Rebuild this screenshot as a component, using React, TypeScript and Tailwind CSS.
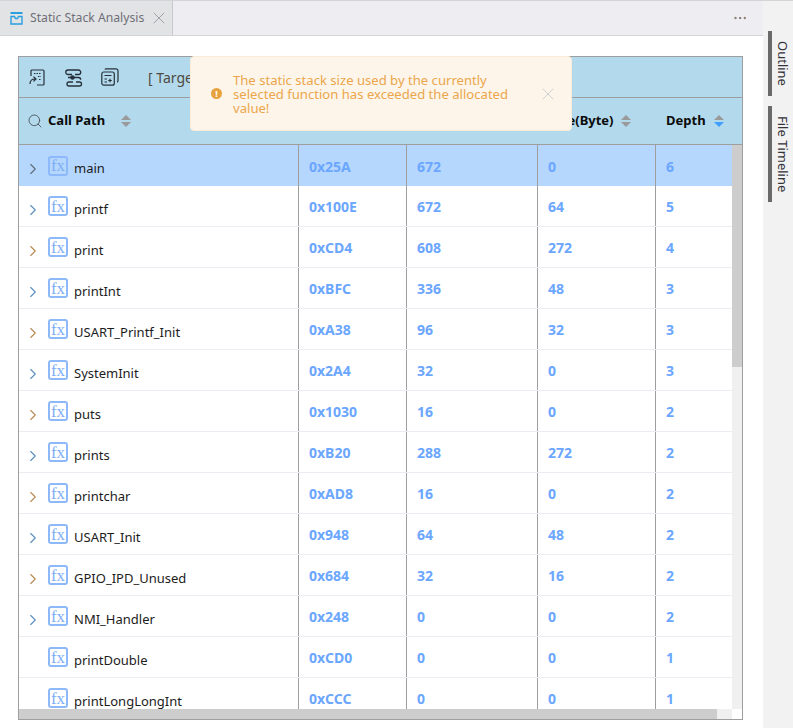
import { ChevronRight, Ellipsis, Search, X } from 'lucide-react'

const ROWS = [
  { name: 'main', addr: '0x25A', total: '672', size: '0', depth: '6', chevron: 'text-[#5f6b7a]' },
  { name: 'printf', addr: '0x100E', total: '672', size: '64', depth: '5', chevron: 'text-[#5a8fc0]' },
  { name: 'print', addr: '0xCD4', total: '608', size: '272', depth: '4', chevron: 'text-[#b98a55]' },
  { name: 'printInt', addr: '0xBFC', total: '336', size: '48', depth: '3', chevron: 'text-[#5a8fc0]' },
  { name: 'USART_Printf_Init', addr: '0xA38', total: '96', size: '32', depth: '3', chevron: 'text-[#b98a55]' },
  { name: 'SystemInit', addr: '0x2A4', total: '32', size: '0', depth: '3', chevron: 'text-[#5a8fc0]' },
  { name: 'puts', addr: '0x1030', total: '16', size: '0', depth: '2', chevron: 'text-[#b98a55]' },
  { name: 'prints', addr: '0xB20', total: '288', size: '272', depth: '2', chevron: 'text-[#5a8fc0]' },
  { name: 'printchar', addr: '0xAD8', total: '16', size: '0', depth: '2', chevron: 'text-[#b98a55]' },
  { name: 'USART_Init', addr: '0x948', total: '64', size: '48', depth: '2', chevron: 'text-[#5a8fc0]' },
  { name: 'GPIO_IPD_Unused', addr: '0x684', total: '32', size: '16', depth: '2', chevron: 'text-[#b98a55]' },
  { name: 'NMI_Handler', addr: '0x248', total: '0', size: '0', depth: '2', chevron: 'text-[#5a8fc0]' },
  { name: 'printDouble', addr: '0xCD0', total: '0', size: '0', depth: '1', chevron: '' },
  { name: 'printLongLongInt', addr: '0xCCC', total: '0', size: '0', depth: '1', chevron: '' },
]

function SortIcon({ active }: { active?: boolean }) {
  return (
    <span className="flex flex-col gap-[2px]">
      <span className="h-0 w-0 border-x-[5px] border-b-[5px] border-x-transparent border-b-[#9a9a9a]" />
      <span className={`h-0 w-0 border-x-[5px] border-t-[5px] border-x-transparent ${active ? 'border-t-[#409eff]' : 'border-t-[#9a9a9a]'}`} />
    </span>
  )
}

function FxIcon() {
  return (
    <span className="flex h-[20px] w-[20px] shrink-0 items-center justify-center rounded-[3px] border-2 border-[#8db9fb] font-['Liberation_Serif',serif] text-[17px] leading-none text-[#7eaef5]">
      fx
    </span>
  )
}

export default function App() {
  return (
    <div className="flex h-[728px] w-[793px] overflow-hidden bg-white font-['Noto_Sans',sans-serif] text-[13px]">
      <div className="flex w-[763px] flex-col">
        {/* Tabs */}
        <div className="flex h-[36px] shrink-0 items-stretch justify-between border-y border-[#d4d4d8] bg-[#eeeef2]">
          <div className="flex w-[173px] items-center whitespace-nowrap border-r border-[#c8c8cc] bg-[#e2e3e5] pl-[10px] text-[12.2px] text-[#6f6f78]">
            <svg className="shrink-0" width="13" height="13" viewBox="0 0 13 13" fill="none" stroke="#2a9fe0" strokeWidth="1.4">
              <path d="M0.5 1h12" strokeWidth="2" />
              <path d="M1 4.5h3.5l1 2h2l1-2H12V12H1z" />
            </svg>
            <span className="ml-[7px]">Static Stack Analysis</span>
            <X size={20} strokeWidth={0.9} className="ml-[5px] shrink-0 text-[#8a8a90]" />
          </div>
          <Ellipsis size={16} strokeWidth={1.5} className="mr-[15px] mt-[9px] text-[#7a6a5c]" />
        </div>

        {/* Table panel */}
        <div className="relative flex-1 pb-[8px] pl-[18px] pr-[20px] pt-[20px]">
          <div className="flex h-[664px] flex-col border border-[#9e9e9e]">
            <div className="flex h-[41px] shrink-0 items-center border-b border-[#9e9e9e] bg-[#b3d9ec] pl-[10px]">
              <svg width="17" height="17" viewBox="0 0 17 17" fill="none" stroke="#26303a" strokeWidth="1.2">
                <path d="M2 7V2a1 1 0 0 1 1-1h11a1 1 0 0 1 1 1v13a1 1 0 0 1-1 1H8" />
                <path d="M5 4.5h7M9 7.5h3M10 10.5h2" strokeDasharray="1.5 1" />
                <path d="M1 15c0-3.5 2-5 5-5M4.5 7.8 7 10l-2.5 2.4" />
              </svg>
              <svg className="ml-[18px]" width="19" height="19" viewBox="0 0 19 19" fill="none" stroke="#26303a" strokeWidth="1.3">
                <path d="M7 5.5H3a2 2 0 0 1 0-4.5h10.5a2 2 0 0 1 0 4.5H10" transform="translate(1 1)" />
                <path d="M4 9.5h10.5a2.2 2.2 0 0 1 2.2 2.2v0M4 9.5" />
                <path d="M12 14h3.5a2 2 0 0 1 0 4H5a2 2 0 0 1 0-4h4" />
                <circle cx="8.5" cy="9.5" r="1.6" fill="#26303a" />
              </svg>
              <svg className="ml-[18px]" width="18" height="18" viewBox="0 0 18 18" fill="none" stroke="#26303a" strokeWidth="1.2">
                <rect x="0.8" y="4" width="12.5" height="13.2" rx="2" />
                <path d="M4 1.5a1 1 0 0 1 1-.7h10a2 2 0 0 1 2 2v10a1.5 1.5 0 0 1-1 1.4" />
                <path d="M3.5 7.5h7M3.5 11h2.5M3.5 14h2.5M7.2 12.5h3.6M9 10.7v3.6" />
              </svg>
              <span className="ml-[29px] text-[14px] text-[#4f4a42]">[ Target</span>
            </div>

            <div className="grid h-[47px] shrink-0 grid-cols-[280px_108px_131px_118px_1fr] items-center border-b border-[#9e9e9e] bg-[#b3d9ec] font-bold text-[#0b0b0b]">
              <div className="flex items-center pl-[8px]">
                <Search size={16} strokeWidth={1.4} className="text-[#4c5660]" />
                <span className="ml-[5px]">Call Path</span>
                <span className="ml-[16px]"><SortIcon /></span>
              </div>
              <div />
              <div />
              <div className="flex items-center pl-[12px]">
                <span>Size(Byte)</span>
                <span className="ml-[7px]"><SortIcon /></span>
              </div>
              <div className="flex items-center pl-[10px]">
                <span>Depth</span>
                <span className="ml-[8px]"><SortIcon active /></span>
              </div>
            </div>

            <div className="flex min-h-0 flex-1">
              <div className="min-w-0 flex-1 overflow-hidden">
                {ROWS.map((row, idx) => (
                  <div
                    key={row.name}
                    className={`grid h-[41px] grid-cols-[280px_108px_131px_118px_1fr] text-[14px] font-bold text-[#6ba6ff] ${idx === 0 ? 'bg-[#b5d7fe]' : 'border-b border-[#ececf2]'}`}
                  >
                    <div className="flex items-center border-r border-[#9e9e9e] pl-[5px] text-[13px] font-normal text-[#1c1c1c]">
                      <span className="mt-[7px] flex w-[24px] shrink-0">
                        {row.chevron && <ChevronRight size={18} strokeWidth={1.5} className={row.chevron} />}
                      </span>
                      <FxIcon />
                      <span className="ml-[6px] mt-[7px]">{row.name}</span>
                    </div>
                    <div className="flex items-center border-r border-[#9e9e9e] pl-[10px] pt-[1px]">{row.addr}</div>
                    <div className="flex items-center border-r border-[#9e9e9e] pl-[10px] pt-[1px]">{row.total}</div>
                    <div className="flex items-center border-r border-[#9e9e9e] pl-[10px] pt-[1px]">{row.size}</div>
                    <div className="flex items-center pl-[10px] pt-[1px]">{row.depth}</div>
                  </div>
                ))}
              </div>
              <div className="w-[10px] shrink-0 bg-[#f0f0f0]">
                <div className="h-[222px] bg-[#cdcdcd]" />
              </div>
            </div>

            <div className="flex h-[10px] shrink-0">
              <div className="w-[698px] bg-[#cdcdcd]" />
              <div className="w-[15px] bg-[#f0f0f0]" />
            </div>
          </div>

          {/* Warning toast */}
          <div className="absolute left-[190px] top-[20px] flex h-[75px] w-[382px] items-center rounded-[4px] border border-[#faecd8] bg-[#fdf5ea] pl-[20px]">
            <span className="flex h-[11px] w-[11px] shrink-0 items-center justify-center rounded-full bg-[#e6a23c] text-[9px] font-bold leading-none text-white">!</span>
            <p className="ml-[11px] w-[285px] text-[13.1px] leading-[14px] text-[#eba64c]">
              The static stack size used by the currently selected function has exceeded the allocated value!
            </p>
            <X size={20} strokeWidth={0.9} className="ml-[20px] text-[#c0c4cc]" />
          </div>
        </div>
      </div>

      {/* Right side tabs */}
      <div className="flex flex-1 flex-col gap-[10px] border-t border-[#d4d4d8] bg-[#f2f2f2] pl-[5px] pt-[30px] text-[#33333a]">
        <div className="flex h-[65px] w-[24px] items-center justify-center border-l-4 border-[#6a6a6a] [writing-mode:vertical-rl]">Outline</div>
        <div className="flex h-[96px] w-[24px] items-center justify-center border-l-4 border-[#6a6a6a] [writing-mode:vertical-rl]">File Timeline</div>
      </div>
    </div>
  )
}
